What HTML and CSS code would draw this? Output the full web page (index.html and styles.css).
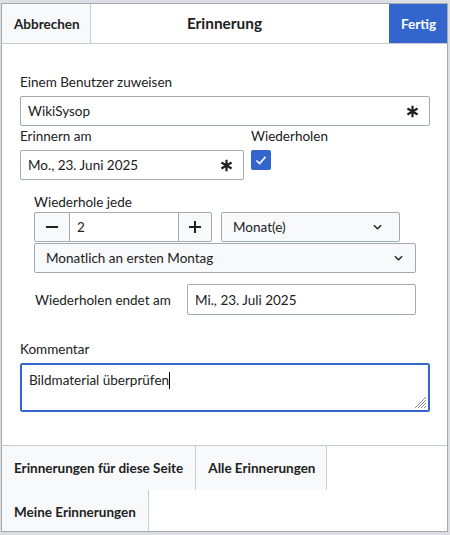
FILE: index.html
```html
<!DOCTYPE html>
<html lang="de">
<head>
<meta charset="utf-8">
<title>Erinnerung</title>
<link rel="stylesheet" href="styles.css">
</head>
<body>
<div class="dialog">
  <div class="head">
    <button class="hbtn cancel">Abbrechen</button>
    <div class="title">Erinnerung</div>
    <button class="hbtn done">Fertig</button>
  </div>
  <div class="body">
    <div class="label first">Einem Benutzer zuweisen</div>
    <div class="field">
      <span>WikiSysop</span>
      <svg class="ast" viewBox="0 0 20 20"><path d="M10 1V19M2.2 5.5L17.8 14.5M17.8 5.5L2.2 14.5"/></svg>
    </div>
    <div class="row2">
      <div>
        <div class="label">Erinnern am</div>
        <div class="field date">
          <span>Mo., 23. Juni 2025</span>
          <svg class="ast" viewBox="0 0 20 20"><path d="M10 1V19M2.2 5.5L17.8 14.5M17.8 5.5L2.2 14.5"/></svg>
        </div>
      </div>
      <div>
        <div class="label">Wiederholen</div>
        <div class="check"><svg viewBox="0 0 20 20"><path d="M5 10.5L8.5 14L15 6.5"/></svg></div>
      </div>
    </div>
    <div class="repeat">
      <div class="label tight">Wiederhole jede</div>
      <div class="numrow">
        <div class="num">
          <div class="nbtn"><svg viewBox="0 0 12 12"><path d="M0 6H12"/></svg></div>
          <div class="nval">2</div>
          <div class="nbtn plus"><svg viewBox="0 0 12 12"><path d="M0 6H12M6 0V12"/></svg></div>
        </div>
        <div class="select unit">
          <span>Monat(e)</span>
          <svg class="chev" viewBox="0 0 10 6"><path d="M1 1L5 5L9 1"/></svg>
        </div>
      </div>
      <div class="select wide">
        <span>Monatlich an ersten Montag</span>
        <svg class="chev" viewBox="0 0 10 6"><path d="M1 1L5 5L9 1"/></svg>
      </div>
      <div class="endrow">
        <div class="label">Wiederholen endet am</div>
        <div class="field">Mi., 23. Juli 2025</div>
      </div>
    </div>
    <div class="label comment">Kommentar</div>
    <div class="textarea">
      <span>Bildmaterial überprüfen</span><span class="caret"></span>
      <svg class="grip" viewBox="0 0 12 12"><path d="M11 3L3 11M11 6L6 11M11 9L9 11M11 0L0 11"/></svg>
    </div>
  </div>
  <div class="foot">
    <button class="fbtn">Erinnerungen für diese Seite</button>
    <button class="fbtn">Alle Erinnerungen</button>
    <button class="fbtn">Meine Erinnerungen</button>
  </div>
</div>
</body>
</html>
```
FILE: styles.css
```css
* { box-sizing: border-box; }
html, body { margin: 0; padding: 0; }
body {
  width: 450px;
  height: 535px;
  overflow: hidden;
  background: #dcdee2;
  font-family: Lato, "Noto Sans", sans-serif;
  font-size: 13.5px;
  color: #202122;
}
.dialog {
  margin: 3px 0 0 1px;
  width: 447px;
  height: 529px;
  border: 1px solid #a2a9b1;
  background: #fff;
  overflow: hidden;
  display: flex;
  flex-direction: column;
}
.head {
  flex: none;
  height: 40px;
  border-bottom: 1px solid #c8ccd1;
  display: grid;
  grid-template-columns: 1fr auto 1fr;
  align-items: stretch;
}
.hbtn {
  font-family: inherit;
  font-size: 13.5px;
  font-weight: 700;
  border: 0;
  margin: 0;
  padding: 0 12px;
  height: 39px;
}
.cancel {
  justify-self: start;
  width: 89px;
  background: #f8f9fa;
  color: #202122;
  border-right: 1px solid #c8ccd1;
}
.done {
  justify-self: end;
  width: 58px;
  background: #36c;
  color: #fff;
}
.title {
  align-self: center;
  font-size: 15.4px;
  font-weight: 700;
  padding-bottom: 1px;
}
.body {
  flex: none;
  height: 401px;
  padding: 28px 17px 0 18px;
}
.label {
  line-height: 20px;
  margin-bottom: 4px;
}
.label.tight { margin-bottom: 0; }
.field {
  height: 30px;
  border: 1px solid #a2a9b1;
  border-radius: 2px;
  padding: 0 10px 0 7px;
  display: flex;
  align-items: center;
  justify-content: space-between;
  background: #fff;
}
.ast {
  width: 13px;
  height: 13px;
  fill: none;
  stroke: #202122;
  stroke-width: 3.4;
}
.row2 {
  display: grid;
  grid-template-columns: 224px 1fr;
  column-gap: 7px;
}
.field.date { padding-right: 10px; }
.check {
  width: 20px;
  height: 20px;
  border-radius: 2px;
  background: #36c;
  display: flex;
  align-items: center;
  justify-content: center;
}
.check svg {
  width: 18px;
  height: 18px;
  fill: none;
  stroke: #fff;
  stroke-width: 1.8;
}
.repeat {
  margin: 12px 14px 0 14px;
}
.numrow {
  display: flex;
  gap: 9px;
  margin-bottom: 1px;
}
.num {
  width: 178px;
  height: 30px;
  display: flex;
}
.nbtn {
  width: 36px;
  border: 1px solid #a2a9b1;
  border-radius: 2px 0 0 2px;
  background: #f8f9fa;
  display: flex;
  align-items: center;
  justify-content: center;
}
.nbtn.plus {
  width: 34px;
  border-radius: 0 2px 2px 0;
}
.nbtn svg {
  width: 12px;
  height: 12px;
  fill: none;
  stroke: #202122;
  stroke-width: 2;
}
.nval {
  flex: 1;
  border-top: 1px solid #a2a9b1;
  border-bottom: 1px solid #a2a9b1;
  padding-left: 7px;
  display: flex;
  align-items: center;
}
.select {
  height: 30px;
  border: 1px solid #a2a9b1;
  border-radius: 2px;
  background: #f8f9fa;
  display: flex;
  align-items: center;
  justify-content: space-between;
  padding: 0 16px 0 11px;
}
.select.unit {
  width: 179px;
  height: 30px;
  padding-right: 17px;
}
.select.wide {
  width: 382px;
  padding-right: 12px;
}
.chev {
  width: 9px;
  height: 6px;
  fill: none;
  stroke: #202122;
  stroke-width: 1.5;
}
.endrow {
  margin-top: 11px;
  display: grid;
  grid-template-columns: 153px 1fr;
  align-items: center;
}
.endrow .label { margin: 0 0 0 1px; }
.endrow .field { height: 31px; }
.label.comment {
  margin-top: 24px;
}
.textarea {
  position: relative;
  height: 49px;
  border: 1px solid #36c;
  border-radius: 2px;
  box-shadow: inset 0 0 0 1px #36c;
  padding: 6px 8px;
  line-height: 20px;
}
.caret {
  display: inline-block;
  width: 1px;
  height: 17px;
  background: #000;
  vertical-align: -4px;
}
.grip {
  position: absolute;
  right: 2px;
  bottom: 2px;
  width: 12px;
  height: 12px;
  fill: none;
  stroke: #8a8f96;
  stroke-width: 1;
}
.foot {
  flex: none;
  border-top: 1px solid #c8ccd1;
  display: flex;
  flex-wrap: wrap;
}
.fbtn {
  height: 44px;
  margin: 0;
  border: 0;
  border-right: 1px solid #c8ccd1;
  background: #f8f9fa;
  padding: 0 12px;
  font-family: inherit;
  font-size: 13.5px;
  font-weight: 700;
  color: #202122;
}
.fbtn:nth-child(2) { padding: 0 11px 0 12px; }
```
